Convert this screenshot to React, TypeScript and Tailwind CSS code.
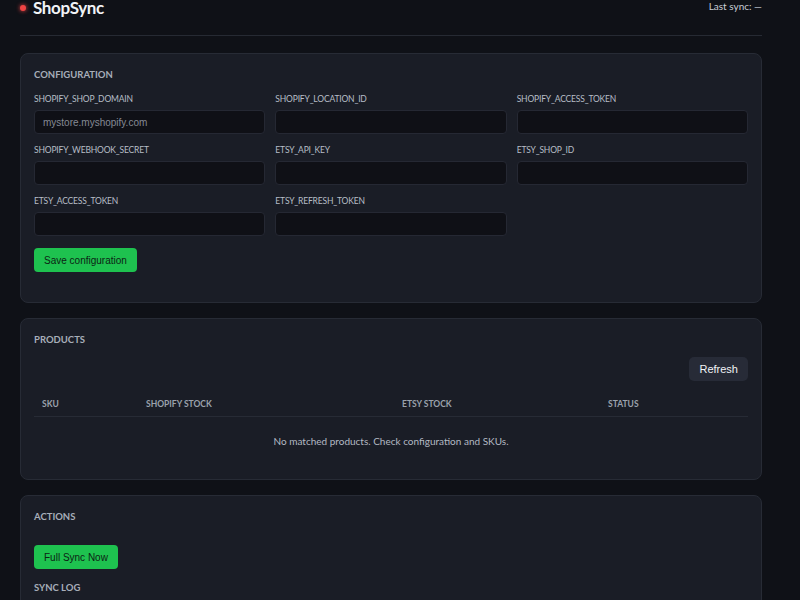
import { useState } from "react";

const FIELDS: { key: string; placeholder?: string }[] = [
  { key: "SHOPIFY_SHOP_DOMAIN", placeholder: "mystore.myshopify.com" },
  { key: "SHOPIFY_LOCATION_ID" },
  { key: "SHOPIFY_ACCESS_TOKEN" },
  { key: "SHOPIFY_WEBHOOK_SECRET" },
  { key: "ETSY_API_KEY" },
  { key: "ETSY_SHOP_ID" },
  { key: "ETSY_ACCESS_TOKEN" },
  { key: "ETSY_REFRESH_TOKEN" },
];

const COLUMNS = ["SKU", "Shopify stock", "Etsy stock", "Status"];

function Card({ title, children, className = "" }: { title: string; children: React.ReactNode; className?: string }) {
  return (
    <section
      className={`rounded-lg border border-[#272b35] bg-[#1a1d26] px-[13px] pt-[14px] ${className}`}
    >
      <h2 className="text-[9.5px] font-bold uppercase leading-[13px] text-[#a7aeb9]">{title}</h2>
      {children}
    </section>
  );
}

export default function App() {
  const [values, setValues] = useState<Record<string, string>>({});

  return (
    <div className="min-h-screen bg-[#0f1117] pl-5 pr-[38px] font-['Lato',sans-serif] text-[#e5e7eb]">
      <header className="-mt-[1px] flex items-start justify-between border-b border-[#262a33] pb-[19px]">
        <div className="flex items-center gap-[7px]">
          <span className="h-[6px] w-[6px] rounded-full bg-[#ef4444] shadow-[0_0_4px_#ef4444]" />
          <h1 className="text-[17px] font-bold leading-none tracking-[-0.02em] text-[#f1f3f6]">ShopSync</h1>
        </div>
        <p className="mt-[2px] text-[10px] leading-none text-[#c9ced6]">Last sync: —</p>
      </header>

      <main className="flex flex-col gap-[15px] pt-[17px]">
        <Card title="Configuration" className="pb-[30px]">
          <div className="mt-[12px] grid grid-cols-3 gap-x-[10px] gap-y-[10px]">
            {FIELDS.map((f) => (
              <label key={f.key} className="flex flex-col gap-[5px]">
                <span className="text-[8.5px] leading-[12px] tracking-[-0.02em] text-[#b7bdc7]">{f.key}</span>
                <input
                  value={values[f.key] ?? ""}
                  onChange={(e) => setValues((v) => ({ ...v, [f.key]: e.target.value }))}
                  placeholder={f.placeholder}
                  className="h-[24px] rounded-[4px] border border-[#252833] bg-[#0f1016] px-[8px] font-['Liberation_Sans',Arial,sans-serif] text-[10px] text-[#e5e7eb] outline-none placeholder:text-[#858a94]"
                />
              </label>
            ))}
          </div>
          <button
            type="button"
            className="mt-[12px] h-[24px] rounded-[4px] bg-[#1ec24f] px-[10px] font-['Liberation_Sans',Arial,sans-serif] text-[10px] text-[#0c2414]"
          >
            Save configuration
          </button>
        </Card>

        <Card title="Products" className="pb-[31px]">
          <div className="mt-[11px] flex justify-end">
            <button
              type="button"
              className="h-[24px] rounded-[5px] bg-[#272b37] px-[10px] font-['Liberation_Sans',Arial,sans-serif] text-[11px] text-[#f1f3f6]"
            >
              Refresh
            </button>
          </div>
          <div className="mt-[17px]">
            <div className="grid grid-cols-[104px_256px_206px_1fr] border-b border-[#272b35] pb-[6px]">
              {COLUMNS.map((c) => (
                <span key={c} className="px-[8px] text-[8.5px] font-bold uppercase leading-[12px] text-[#9ba2ad]">
                  {c}
                </span>
              ))}
            </div>
            <p className="pt-[18px] text-center text-[10px] leading-[13px] text-[#b3b9c3]">
              No matched products. Check configuration and SKUs.
            </p>
          </div>
        </Card>

        <Card title="Actions" className="pb-[20px]">
          <button
            type="button"
            className="mt-[22px] block h-[24px] rounded-[4px] bg-[#1ec24f] px-[10px] font-['Liberation_Sans',Arial,sans-serif] text-[10px] text-[#0c2414]"
          >
            Full Sync Now
          </button>
          <h3 className="mt-[12px] text-[9.5px] font-bold uppercase leading-[13px] text-[#a7aeb9]">
            Sync log
          </h3>
          <div className="mt-[8px] h-[80px] rounded-[4px] border border-[#252833] bg-[#0f1016]" />
        </Card>
      </main>
    </div>
  );
}
